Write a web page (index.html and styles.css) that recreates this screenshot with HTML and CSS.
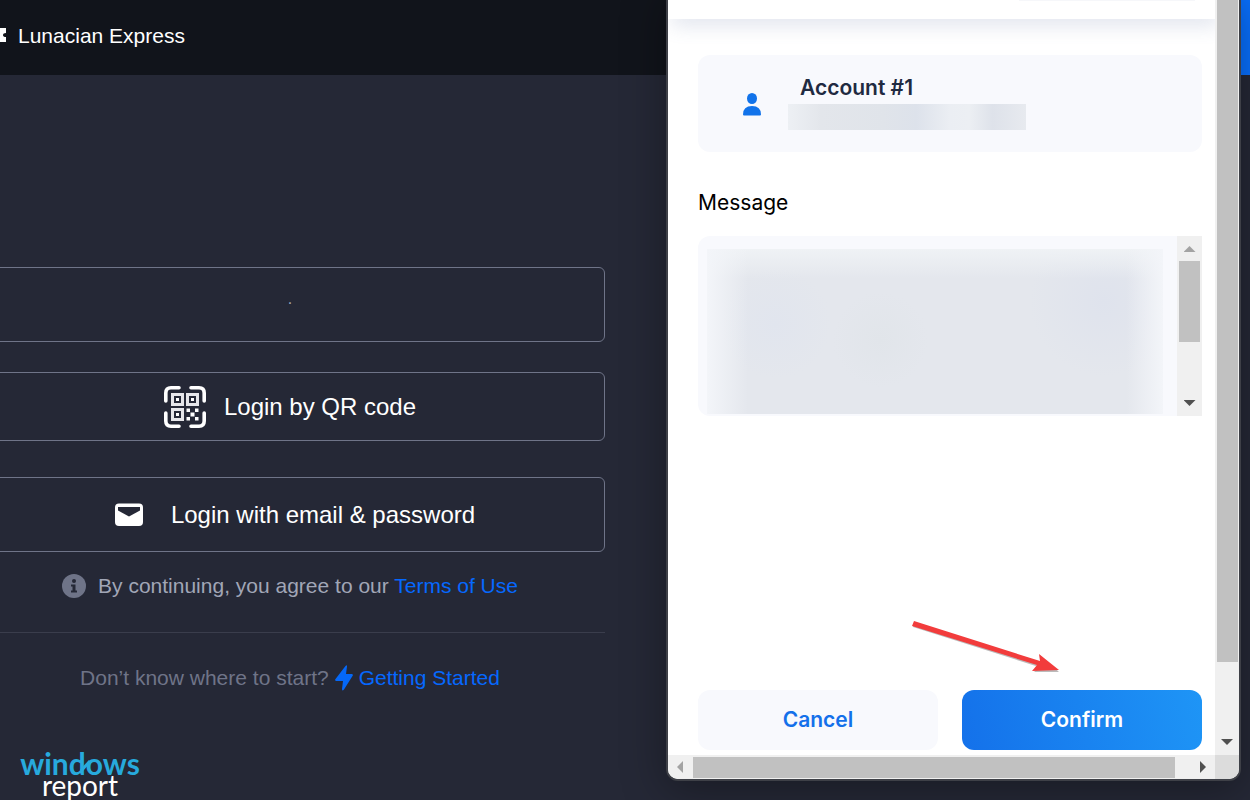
FILE: index.html
```html
<!DOCTYPE html>
<html lang="en">
<head>
    <meta charset="UTF-8">
    <meta name="viewport" content="width=device-width, initial-scale=1.0">
    <title>Lunacian Express</title>
    <link rel="stylesheet" href="styles.css">
</head>
<body>
    <header class="topbar">
        <svg class="topbar-icon" width="6" height="14" viewBox="0 0 6 14">
            <path d="M0 0h6v5Q3 5 3 7t3 2v5H0z" fill="#fff"/>
        </svg>
        <a href="#" class="topbar-link">Lunacian Express</a>
        <button class="topbar-button" aria-label="Play"></button>
    </header>

    <main class="login">
        <button class="login-button loading">.</button>
        <button class="login-button qr">
            <svg width="42" height="42" viewBox="0 0 42 42" fill="none" stroke="#fff">
                <path d="M1.800 15V7q0-5.200 5.200-5.200h8M27 1.800h8q5.200 0 5.200 5.200v8M40.200 27v8q0 5.200-5.200 5.200h-8M15 40.200H7q-5.200 0-5.200-5.200v-8" stroke-width="3.600" stroke-linecap="round"/>
                <path d="M8.500 8.500h10v10h-10zM23.500 8.500h10v10h-10zM8.500 23.500h10v10h-10z" stroke-width="3" stroke="#e6e6ea"/>
                <path d="M12 12h3v3h-3zM27 12h3v3h-3zM12 27h3v3h-3zM22.500 22.500h3.500v3.500h-3.500zM31 22.500h3.500v3.500H31zM26.500 26.500h4v4h-4zM22.500 31h3.500v3.500h-3.500zM31 31h3.500v3.500H31z" fill="#fff" stroke="none"/>
            </svg>
            <span>Login by QR code</span>
        </button>
        <button class="login-button email">
            <svg width="28" height="23" viewBox="0 0 28 23">
                <rect x="0" y="0.500" width="28" height="22.500" rx="4" fill="#fff"/>
                <path d="M3 4h22v3.500L14 13.500 3 7.500z" fill="#252836"/>
            </svg>
            <span>Login with email &amp; password</span>
        </button>

        <p class="terms">
            <svg width="24" height="24" viewBox="0 0 24 24">
                <circle cx="12" cy="12" r="12" fill="#6f7488"/>
                <circle cx="12" cy="7" r="2" fill="#252836"/>
                <path d="M9 10.500h4.500v6H15V18.500H9v-2h1.500v-4H9z" fill="#252836"/>
            </svg>
            <span>By continuing, you agree to our <a href="#">Terms of Use</a></span>
        </p>
        <p class="start">
            <span>Don’t know where to start?</span>
            <a href="#">
                <svg width="18" height="26" viewBox="0 0 18 26">
                    <path d="M10.500 1q1.500-1.500 1.500.500L11 9h6q1.500.500.500 2L9 24.500q-2 2-2-.500L8 16H1q-1.500-.500-.500-2z" fill="#0568f8"/>
                </svg>
                Getting Started
            </a>
        </p>
    </main>

    <div class="watermark">
        <span class="windows">windows</span>
        <span class="report">report</span>
        <svg class="loop" width="12" height="14" viewBox="0 0 12 14">
            <path d="M1 13 10 3" stroke="#27aadd" stroke-width="3"/>
        </svg>
    </div>

    <section class="popup">
        <div class="pane">
            <div class="pane-header"><div class="network"></div></div>
            <div class="pane-body">
                <div class="account">
                    <svg width="18" height="24" viewBox="0 0 18 24" fill="#1273ea">
                        <ellipse cx="9" cy="6.500" rx="5" ry="5.500"/>
                        <path d="M0 22.500q0-8.500 9-8.500t9 8.500q0 1-1 1H1q-1 0-1-1z"/>
                    </svg>
                    <div>
                        <h2 class="account-name">Account #1</h2>
                        <div class="account-address"></div>
                    </div>
                </div>
                <h3 class="label">Message</h3>
                <div class="message">
                    <div class="message-text"></div>
                    <div class="scroll vertical">
                        <i class="arrow up"></i>
                        <i class="thumb"></i>
                        <i class="arrow down"></i>
                    </div>
                </div>
                <div class="actions">
                    <button class="cancel">Cancel</button>
                    <button class="confirm">Confirm</button>
                </div>
            </div>
        </div>
        <div class="scroll vertical page-scroll">
            <i class="thumb"></i>
            <i class="arrow down"></i>
        </div>
        <div class="scroll horizontal">
            <i class="arrow left"></i>
            <i class="thumb"></i>
            <i class="arrow right"></i>
        </div>
        <div class="corner"></div>
        <svg class="pointer" width="152" height="54" viewBox="0 0 152 54">
            <path d="M3 3 2 7l126 40-5 5h25L129 35l1 7z" fill="#777" opacity=".5"/>
            <path d="M3 1 1 6l125 39-5 6 27-1-20-16 1 7z" fill="#f23c3c"/>
        </svg>
    </section>
</body>
</html>
```

FILE: styles.css
```css
* {
    box-sizing: border-box;
}
body {
    position: relative;
    margin: 0;
    min-height: 100vh;
    overflow: hidden;
    background: #252836;
    color: white;
    font-family: "Liberation Sans", Arial, sans-serif;
    font-size: 21px;
}
button {
    font: inherit;
    cursor: pointer;
}
a {
    color: #0568ff;
    text-decoration: none;
}
p, h2, h3 {
    margin: 0;
}

/* top bar */
.topbar {
    display: flex;
    align-items: center;
    gap: 12px;
    height: 75px;
    background: #11141b;
}
.topbar-icon {
    margin-bottom: 5px;
}
.topbar-link {
    margin-bottom: 4px;
    color: white;
}
.topbar-button {
    align-self: stretch;
    width: 60px;
    margin-left: auto;
    border: none;
    background: #0870ff;
}

/* login column */
.login {
    display: flex;
    flex-direction: column;
    margin: 192px 645px 0 -25px;
}
.login-button {
    display: flex;
    align-items: center;
    justify-content: center;
    height: 75px;
    padding: 0;
    border: 1px solid #6f7488;
    border-radius: 6px;
    background: transparent;
    color: white;
    font-size: 24px;
}
.loading {
    padding-bottom: 12px;
    color: #a1a6b6;
    font-size: 16px;
}
.qr {
    gap: 18px;
    height: 69px;
    margin: 30px 0 36px;
}
.email {
    gap: 28px;
    padding-left: 10px;
}
.terms,
.start {
    display: flex;
    align-items: center;
    justify-content: center;
    white-space: nowrap;
}
.terms {
    gap: 12px;
    height: 81px;
    padding-bottom: 12px;
    border-bottom: 1px solid #3a3d4c;
    color: #a1a6b6;
}
.start {
    gap: 6px;
    height: 90px;
    color: #6f7488;
}
.start a {
    display: flex;
    align-items: center;
    gap: 6px;
}

.watermark {
    position: absolute;
    left: 20px;
    bottom: 4px;
    display: flex;
    flex-direction: column;
    align-items: center;
    width: 120px;
    font-family: Lato, sans-serif;
    line-height: 22px;
}
.windows {
    color: #27aadd;
    font-size: 30px;
    font-weight: bold;
}
.report {
    font-size: 28px;
}
.loop {
    position: absolute;
    top: 6px;
    left: 60px;
}

/* wallet popup */
.popup {
    position: absolute;
    top: -12px;
    right: 9px;
    bottom: 19px;
    display: grid;
    grid-template-columns: 1fr 24px;
    grid-template-rows: 1fr 24px;
    width: 575px;
    overflow: hidden;
    border: 2px solid #3e4047;
    border-radius: 12px;
    background: white;
    box-shadow: 0 8px 44px rgba(0, 0, 0, 0.35);
    font-family: Inter, sans-serif;
}
.pane {
    display: flex;
    flex-direction: column;
    padding-top: 10px;
}
.pane-header {
    height: 19px;
    box-shadow: 4px 6px 20px rgba(90, 110, 160, 0.2);
    clip-path: inset(0 0 -40px 0);
}
.network {
    width: 176px;
    height: 1px;
    margin: 0 20px 0 auto;
    background: #f6f7fa;
}
.pane-body {
    display: flex;
    flex: 1;
    flex-direction: column;
    padding: 36px 13px 5px 30px;
}
.account {
    display: flex;
    align-items: center;
    gap: 27px;
    height: 97px;
    padding-left: 45px;
    border-radius: 12px;
    background: #f8f9fd;
}
.account-name {
    padding-left: 12px;
    color: #1f2a41;
    font-size: 21px;
    font-weight: 600;
    line-height: 32px;
}
.account-address {
    width: 238px;
    height: 26px;
    margin-bottom: 6px;
    background: linear-gradient(90deg, #edf0f4, #e3e6eb 14%, #e0e4ea 40%, #dde2eb 54%, #ebeef3 68%, #eceff3 76%, #dee2ea 86%, #e7eaef);
}
.label {
    margin: 36px 0 18px;
    color: black;
    font-size: 21px;
    font-weight: 400;
    line-height: 30px;
}
.message {
    display: flex;
    height: 180px;
    overflow: hidden;
    border-radius: 12px 0 0 12px;
    background: #f8f9fd;
}
.message-text {
    flex: 1;
    margin: 13px 14px 2px 9px;
    background:
        linear-gradient(90deg, #f3f5f9, rgba(243, 245, 249, 0) 9%, rgba(245, 247, 251, 0) 92%, #f3f5f9),
        linear-gradient(#eff2f5, rgba(239, 242, 245, 0) 18%),
        radial-gradient(circle at 15% 45%, #e1e5ee, rgba(225, 229, 238, 0) 14%),
        radial-gradient(circle at 87% 32%, #dfe3ed, rgba(223, 227, 237, 0) 18%),
        radial-gradient(circle at 38% 55%, #e1e5ea, rgba(225, 229, 234, 0) 16%),
        #e4e7ed;
}

.scroll {
    display: flex;
    align-items: center;
    background: #f0f0f0;
}
.vertical {
    flex-direction: column;
    width: 25px;
    padding: 10px 0;
}
.thumb {
    background: #c1c1c1;
}
.vertical .thumb {
    width: 21px;
    height: 81px;
    margin: 9px 0 auto;
}
.page-scroll {
    width: auto;
    padding: 0 0 10px;
}
.page-scroll .thumb {
    flex: 1;
    margin: 0 0 77px;
}
.horizontal {
    padding: 0 9px;
}
.horizontal .thumb {
    flex: 1;
    height: 21px;
    margin: 0 25px 0 10px;
}
.arrow {
    width: 12px;
    height: 6px;
    background: #505050;
}
.up {
    background: #a3a3a3;
    clip-path: polygon(50% 0, 100% 100%, 0 100%);
}
.down {
    clip-path: polygon(0 0, 100% 0, 50% 100%);
}
.left,
.right {
    width: 6px;
    height: 12px;
}
.left {
    background: #a3a3a3;
    clip-path: polygon(100% 0, 100% 100%, 0 50%);
}
.right {
    clip-path: polygon(0 0, 100% 50%, 0 100%);
}
.corner {
    background: #dcdcdc;
}

.actions {
    display: grid;
    grid-template-columns: 1fr 1fr;
    gap: 24px;
    margin-top: auto;
}
.actions button {
    height: 60px;
    padding: 0 0 2px;
    border: none;
    border-radius: 12px;
    font-weight: 600;
}
.cancel {
    background: #f8f9fd;
    color: #1470ea;
}
.confirm {
    background: linear-gradient(75deg, #1471ea, #1e95f6);
    color: white;
}
.pointer {
    position: absolute;
    right: 176px;
    bottom: 105px;
}
```
